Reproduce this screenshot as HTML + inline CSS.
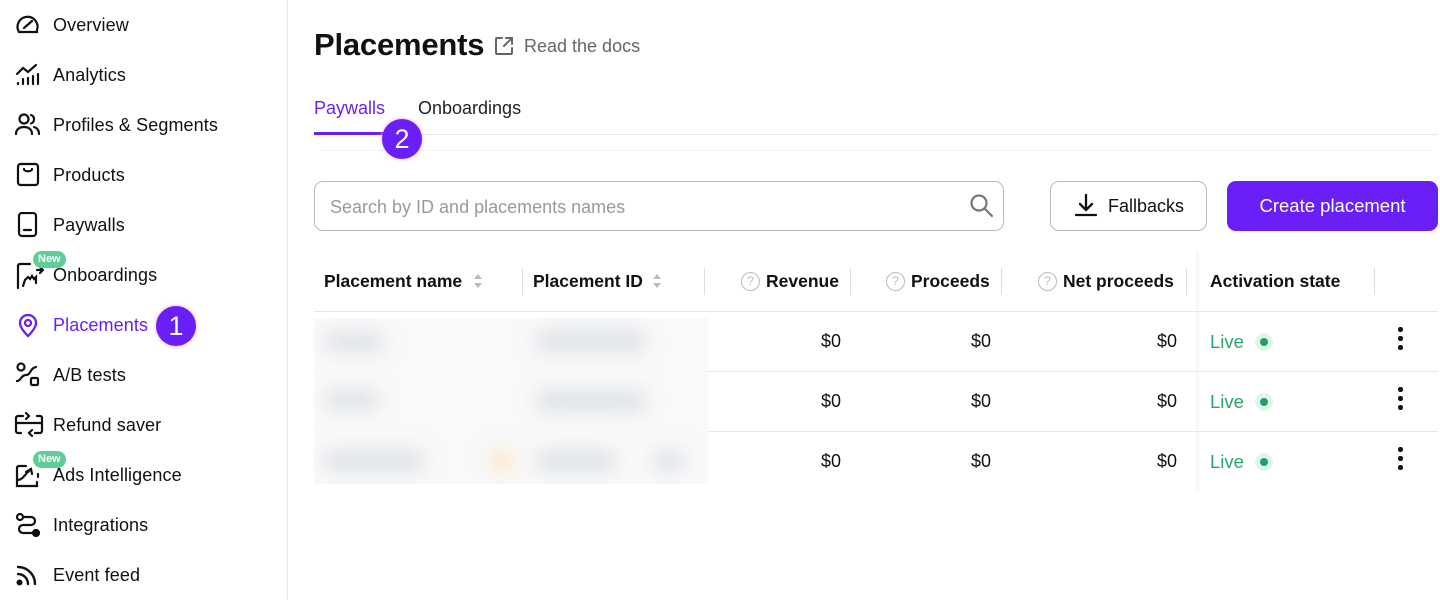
<!DOCTYPE html>
<html><head><meta charset="utf-8"><style>
*{box-sizing:border-box;margin:0;padding:0}
body{width:1440px;height:600px;overflow:hidden;background:#fff;font-family:"Liberation Sans",sans-serif;color:#111;position:relative}
.a{position:absolute}
.side{position:absolute;left:0;top:0;width:288px;height:600px;border-right:1px solid #e8e8ea}
.it{position:absolute;left:0;height:50px;width:287px}
.it svg{position:absolute;left:14px;top:12px}
.it span{position:absolute;left:53px;top:0;line-height:50px;font-size:18px;color:#111;letter-spacing:0.1px}
.new{position:absolute;left:33px;background:#5fcc9a;color:#fff;font-size:11px;font-weight:bold;border-radius:9px;padding:2px 5px;line-height:13px}
.badge{position:absolute;width:40px;height:40px;border-radius:50%;background:#6a1ff7;color:#fff;font-size:27px;text-align:center;line-height:40px;box-shadow:0 0 4px #f3a8d0}
.th{position:absolute;top:268px;font-size:17.5px;font-weight:bold;line-height:26px}
.dv{position:absolute;top:268px;width:1px;height:27px;background:#ddd}
.q{display:inline-block;width:19px;height:19px;border:1.5px solid #bbb;border-radius:50%;color:#bbb;font-size:12px;text-align:center;line-height:16px;font-weight:normal;vertical-align:2px;margin-right:6px}
.num{position:absolute;font-size:18px;text-align:right;width:80px}
.live{position:absolute;left:1210px;font-size:18.5px;color:#27a56a}
.dot{position:absolute;left:1255px;width:18px;height:18px;border-radius:50%;background:#def5ea}
.dot:after{content:"";position:absolute;left:5px;top:5px;width:8px;height:8px;border-radius:50%;background:#20a067}
.km{position:absolute;left:1398px;width:4px}
.km i{display:block;width:4.5px;height:4.5px;border-radius:50%;background:#111;margin-bottom:4.5px}
.rl{position:absolute;height:1px;background:#e8e8ea}
.blob{position:absolute;background:#dfe2e5;filter:blur(9px);border-radius:10px}
</style></head><body>
<div class="side">
<div class="it" style="top:0"><svg width="28" height="26" viewBox="0 0 28 26" fill="none" stroke="#111" stroke-width="2.2" stroke-linecap="round"><path d="M5 20 A10 10 0 1 1 23 18 L23 20 Z"/><path d="M10 16 L18 9"/></svg><span>Overview</span></div>
<div class="it" style="top:50px"><svg width="28" height="26" viewBox="0 0 28 26" fill="none" stroke="#111" stroke-width="2.2" stroke-linecap="round"><path d="M3 12 L9 6 L14 10 L22 3"/><path d="M4 21v1M9 17v5M14 16v6M19 14v8M24 12v10"/></svg><span>Analytics</span></div>
<div class="it" style="top:100px"><svg width="28" height="26" viewBox="0 0 28 26" fill="none" stroke="#111" stroke-width="2.2" stroke-linecap="round"><circle cx="10" cy="7" r="4.5"/><path d="M2 22c0-5 4-7 8-7s8 2 8 7"/><path d="M17 3a4.5 4.5 0 0 1 0 8.5M20 15c3 1 5 3 5 7"/></svg><span>Profiles &amp; Segments</span></div>
<div class="it" style="top:150px"><svg width="28" height="26" viewBox="0 0 28 26" fill="none" stroke="#111" stroke-width="2.2" stroke-linecap="round"><rect x="4" y="2" width="20" height="21" rx="2.5"/><path d="M10 7c0 3 8 3 8 0"/></svg><span>Products</span></div>
<div class="it" style="top:200px"><svg width="28" height="26" viewBox="0 0 28 26" fill="none" stroke="#111" stroke-width="2.2" stroke-linecap="round"><rect x="5" y="1" width="17" height="23" rx="3"/><path d="M10 18h7"/></svg><span>Paywalls</span></div>
<div class="it" style="top:250px"><svg width="30" height="28" viewBox="0 0 30 28" fill="none" stroke="#111" stroke-width="2.2" stroke-linecap="round"><path d="M4 26V4a2 2 0 0 1 2-2h10"/><path d="M9 24l2-6 3-3 2 2 2-3 2 3 2-2v6"/><path d="M23 8h5M26 5l3 3-3 3"/></svg><span>Onboardings</span><div class="new" style="top:1px">New</div></div>
<div class="it" style="top:300px"><svg width="28" height="26" viewBox="0 0 28 26" fill="none" stroke="#6a1ff7" stroke-width="2.3"><path d="M14 24c-5-5-8-9-8-13a8 8 0 0 1 16 0c0 4-3 8-8 13z"/><circle cx="14" cy="11" r="3"/></svg><span style="color:#6a1ff7">Placements</span></div>
<div class="it" style="top:350px"><svg width="28" height="26" viewBox="0 0 28 26" fill="none" stroke="#111" stroke-width="2.2" stroke-linecap="round"><circle cx="7" cy="5" r="3.5"/><rect x="17" y="16" width="7" height="7" rx="1"/><path d="M3 19c4 0 4-6 9-6s4-7 10-8"/></svg><span>A/B tests</span></div>
<div class="it" style="top:400px"><svg width="30" height="26" viewBox="0 0 30 26" fill="none" stroke="#111" stroke-width="2.2" stroke-linecap="round"><path d="M9 4H4a2 2 0 0 0-2 2v13a2 2 0 0 0 2 2h3M21 21h5a2 2 0 0 0 2-2V6a2 2 0 0 0-2-2h-3"/><path d="M2 11h26M12 1l3 3-3 3M18 24l-3-3 3-3"/></svg><span>Refund saver</span></div>
<div class="it" style="top:450px"><svg width="28" height="28" viewBox="0 0 28 28" fill="none" stroke="#111" stroke-width="2.2" stroke-linecap="round"><path d="M12 4H5a2 2 0 0 0-2 2v18h20v-4"/><path d="M3 18c6 0 8-6 12-9M12 10l5-3 1 5"/><path d="M24 12v3"/></svg><span>Ads Intelligence</span><div class="new" style="top:1px">New</div></div>
<div class="it" style="top:500px"><svg width="28" height="26" viewBox="0 0 28 26" fill="none" stroke="#111" stroke-width="2.2" stroke-linecap="round"><circle cx="6" cy="5" r="3"/><path d="M9 5h8a4 4 0 0 1 0 8H9a4 4 0 0 0 0 8h11"/><circle cx="22" cy="21" r="3" fill="#111"/></svg><span>Integrations</span></div>
<div class="it" style="top:550px"><svg width="28" height="26" viewBox="0 0 28 26" fill="none" stroke="#111" stroke-width="2.4" stroke-linecap="round"><path d="M4 12a10 10 0 0 1 10 10M4 5a17 17 0 0 1 17 17"/><circle cx="5.5" cy="20.5" r="1.8" fill="#111"/></svg><span>Event feed</span></div>
<div class="badge" style="left:156px;top:306px">1</div>
</div>

<div class="a" style="left:314px;top:27px;font-size:31px;font-weight:bold;letter-spacing:-0.2px">Placements</div>
<svg class="a" style="left:493px;top:35px" width="22" height="22" viewBox="0 0 22 22" fill="none" stroke="#666" stroke-width="2" stroke-linecap="round"><path d="M9 3H4a1 1 0 0 0-1 1v14a1 1 0 0 0 1 1h14a1 1 0 0 0 1-1v-5"/><path d="M13 3h6v6M19 3l-8 8"/></svg>
<div class="a" style="left:524px;top:36px;font-size:18px;color:#666">Read the docs</div>

<div class="a" style="left:314px;top:98px;font-size:18px;color:#6a1ff7">Paywalls</div>
<div class="a" style="left:418px;top:98px;font-size:18px;color:#222">Onboardings</div>
<div class="rl" style="left:314px;top:134px;width:1124px;background:#e6e6ea"></div>
<div class="a" style="left:314px;top:132px;width:90px;height:3px;background:#6a1ff7"></div>
<div class="rl" style="left:320px;top:150px;width:1112px;background:#f5f3ea"></div>
<div class="badge" style="left:382px;top:119px">2</div>

<div class="a" style="left:314px;top:181px;width:690px;height:50px;border:1px solid #bbb;border-radius:9px"></div>
<div class="a" style="left:330px;top:197px;font-size:18px;color:#9a9a9a">Search by ID and placements names</div>
<svg class="a" style="left:969px;top:193px" width="26" height="26" viewBox="0 0 26 26" fill="none" stroke="#777" stroke-width="2.2" stroke-linecap="round"><circle cx="10" cy="10" r="7.5"/><path d="M16 16l7 7"/></svg>
<div class="a" style="left:1050px;top:181px;width:157px;height:50px;border:1px solid #bbb;border-radius:9px"></div>
<svg class="a" style="left:1074px;top:193px" width="24" height="24" viewBox="0 0 24 24" fill="none" stroke="#111" stroke-width="2.3" stroke-linecap="round"><path d="M12 2v15M6 11l6 6 6-6M2 22h20"/></svg>
<div class="a" style="left:1108px;top:196px;font-size:18px">Fallbacks</div>
<div class="a" style="left:1227px;top:181px;width:211px;height:50px;background:#6a1ff7;border-radius:9px;color:#fff;font-size:18.5px;text-align:center;line-height:50px">Create placement</div>

<div class="th" style="left:324px">Placement name</div>
<svg class="a" style="left:472px;top:273px" width="12" height="16" viewBox="0 0 12 16" fill="#bbb"><path d="M6 1l4 5H2zM6 15l4-5H2z"/></svg>
<div class="dv" style="left:522px"></div>
<div class="th" style="left:533px">Placement ID</div>
<svg class="a" style="left:651px;top:273px" width="12" height="16" viewBox="0 0 12 16" fill="#bbb"><path d="M6 1l4 5H2zM6 15l4-5H2z"/></svg>
<div class="dv" style="left:704px"></div>
<div class="th" style="left:741px"><span class="q">?</span>Revenue</div>
<div class="dv" style="left:850px"></div>
<div class="th" style="left:886px"><span class="q">?</span>Proceeds</div>
<div class="dv" style="left:1001px"></div>
<div class="th" style="left:1038px"><span class="q">?</span>Net proceeds</div>
<div class="dv" style="left:1186px"></div>
<div class="th" style="left:1210px">Activation state</div>
<div class="dv" style="left:1374px"></div>
<div class="a" style="left:1196px;top:251px;width:4px;height:240px;background:linear-gradient(90deg,#f2f2f2,#fff)"></div>

<div class="rl" style="left:314px;top:311px;width:1124px"></div>
<div class="rl" style="left:708px;top:371px;width:730px"></div>
<div class="rl" style="left:708px;top:431px;width:730px"></div>

<div class="a" style="left:314px;top:318px;width:394px;height:166px;background:#f8f9fa;overflow:hidden">
<div class="blob" style="left:10px;top:14px;width:60px;height:20px"></div>
<div class="blob" style="left:222px;top:12px;width:110px;height:22px"></div>
<div class="blob" style="left:10px;top:72px;width:55px;height:20px"></div>
<div class="blob" style="left:222px;top:72px;width:110px;height:22px"></div>
<div class="blob" style="left:10px;top:132px;width:100px;height:22px"></div>
<div class="blob" style="left:175px;top:132px;width:25px;height:22px;background:#fde7c7"></div>
<div class="blob" style="left:222px;top:132px;width:80px;height:22px"></div>
<div class="blob" style="left:340px;top:132px;width:30px;height:22px"></div>
</div>

<div class="num" style="left:761px;top:331px">$0</div><div class="num" style="left:911px;top:331px">$0</div><div class="num" style="left:1097px;top:331px">$0</div>
<div class="num" style="left:761px;top:391px">$0</div><div class="num" style="left:911px;top:391px">$0</div><div class="num" style="left:1097px;top:391px">$0</div>
<div class="num" style="left:761px;top:451px">$0</div><div class="num" style="left:911px;top:451px">$0</div><div class="num" style="left:1097px;top:451px">$0</div>
<div class="live" style="top:331px">Live</div><div class="dot" style="top:333px"></div>
<div class="live" style="top:391px">Live</div><div class="dot" style="top:393px"></div>
<div class="live" style="top:451px">Live</div><div class="dot" style="top:453px"></div>
<div class="km" style="top:327px"><i></i><i></i><i></i></div>
<div class="km" style="top:387px"><i></i><i></i><i></i></div>
<div class="km" style="top:447px"><i></i><i></i><i></i></div>
</body></html>
